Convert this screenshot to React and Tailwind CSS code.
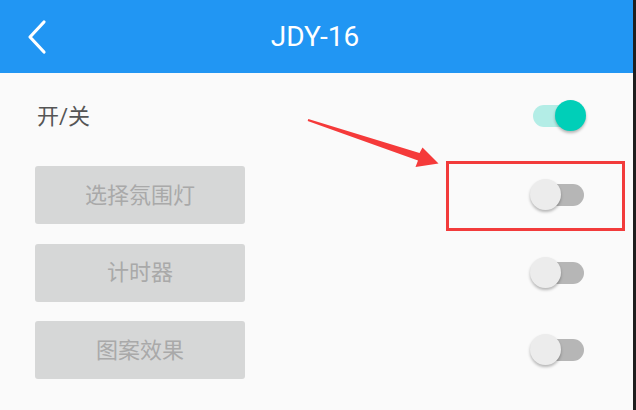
import { useState } from "react";

const font = { fontFamily: '"Roboto", "Noto Sans CJK SC", sans-serif' };

function Toggle({ on, onChange }) {
  return (
    <button
      onClick={onChange}
      className="relative w-[56px] h-[32px] shrink-0"
    >
      <span
        className={`absolute left-[3px] right-[2px] top-[5px] h-[22px] rounded-full ${
          on ? "bg-[#b3ede6]" : "bg-[#b6b6b6]"
        }`}
      />
      <span
        className={`absolute top-0 w-[31px] h-[31px] rounded-full shadow-[0_2px_3px_rgba(0,0,0,0.28)] ${
          on ? "left-[25px] bg-[#00cfb8]" : "left-0 bg-[#ececec]"
        }`}
      />
    </button>
  );
}

export default function App() {
  const [power, setPower] = useState(true);
  const [modes, setModes] = useState({ light: false, timer: false, pattern: false });

  const rows = [
    { key: "light", label: "选择氛围灯" },
    { key: "timer", label: "计时器" },
    { key: "pattern", label: "图案效果" },
  ];

  return (
    <div className="relative w-[636px] h-[410px] bg-[#fafafa] flex overflow-hidden" style={font}>
      <div className="flex-1 flex flex-col">
        {/* header */}
        <div className="h-[73px] bg-[#2196f3] flex items-center relative">
          <svg className="absolute left-[26px] top-[19px]" width="22" height="36" viewBox="0 0 22 36">
            <path d="M18 3 L4 18 L18 33" fill="none" stroke="white" strokeWidth="3.2" strokeLinecap="round" strokeLinejoin="round" />
          </svg>
          <h1 className="flex-1 text-center text-white text-[28px] leading-none pr-[3px]">JDY-16</h1>
        </div>

        {/* power row */}
        <div className="h-[60px] mt-[13px] flex items-center justify-between pl-[37px] pr-[47px]">
          <span className="text-[22px] text-[#555555]">开/关</span>
          <Toggle on={power} onChange={() => setPower(!power)} />
        </div>

        {/* mode rows */}
        <div className="mt-[20px] flex flex-col gap-[19.5px] pl-[35px] pr-[47px]">
          {rows.map((r) => (
            <div key={r.key} className="flex items-center justify-between">
              <div className="w-[210px] h-[58px] rounded-[3px] bg-[#d6d7d7] flex items-center justify-center text-[22px] text-[#a9a9a9]">
                {r.label}
              </div>
              <Toggle
                on={modes[r.key]}
                onChange={() => setModes({ ...modes, [r.key]: !modes[r.key] })}
              />
            </div>
          ))}
        </div>
      </div>
      <div className="w-[3px] bg-[#1e1e1e]" />

      {/* annotation */}
      <svg className="absolute left-0 top-0 pointer-events-none" width="636" height="410">
        <polygon
          points="308.3,119 419.5,153 422.5,147.5 438.5,163.5 415.5,167 418,160.5 307.7,121"
          fill="#f53a3a"
        />
      </svg>
      <div className="absolute left-[446px] top-[161px] w-[179px] h-[70px] border-[3px] border-[#f23b3b] pointer-events-none" />
    </div>
  );
}
